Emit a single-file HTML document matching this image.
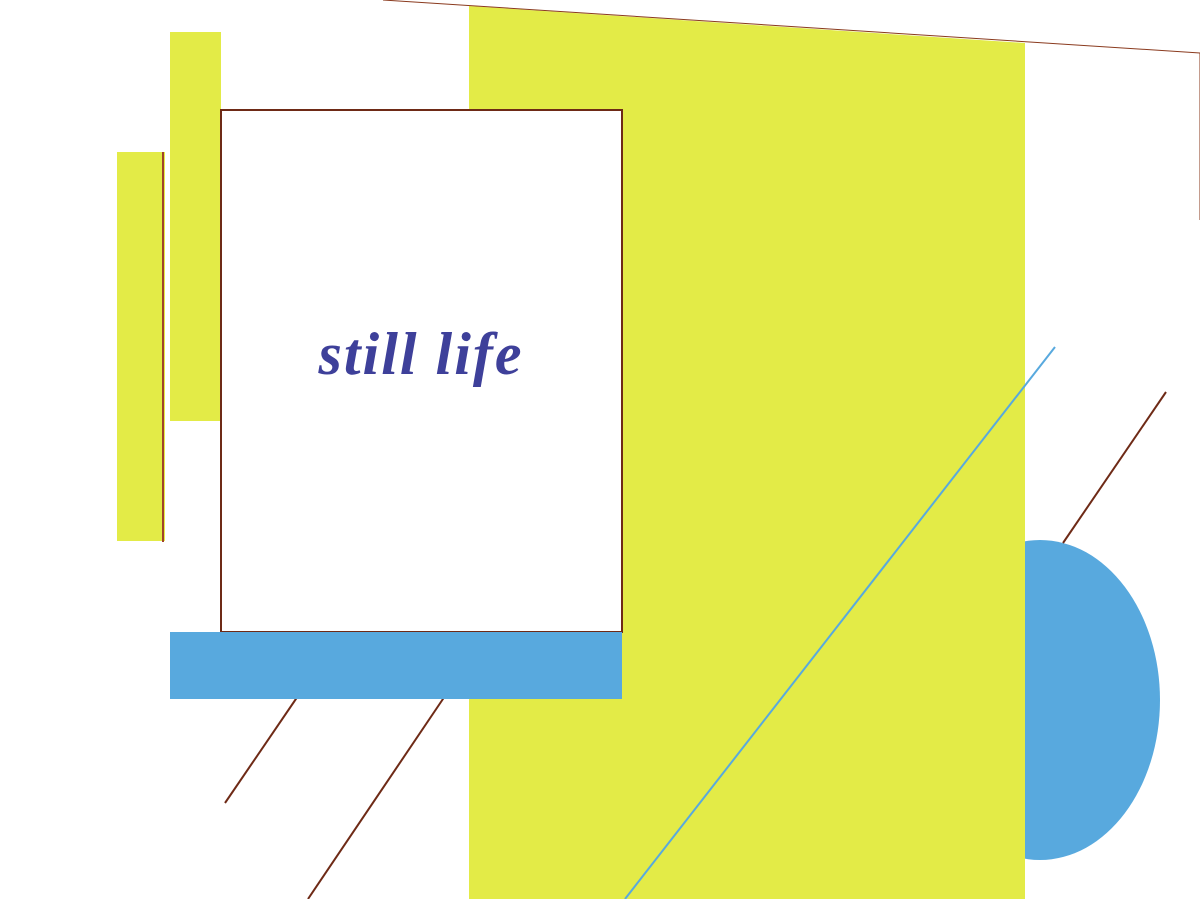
<!DOCTYPE html>
<html><head><meta charset="utf-8"><style>
html,body{margin:0;padding:0;background:#fff;width:1200px;height:899px;overflow:hidden}
</style></head><body>
<svg width="1200" height="899" viewBox="0 0 1200 899" xmlns="http://www.w3.org/2000/svg">
<rect width="1200" height="899" fill="#fff"/>
<ellipse cx="1040" cy="700" rx="120" ry="160" fill="#58a9de"/>
<polygon points="469,6 1025,43 1025,899 469,899" fill="#e3eb47"/>
<polyline points="383,0 1200,53 1200,220" fill="none" stroke="#8a3a1e" stroke-width="1"/>
<line x1="1063" y1="543" x2="1166" y2="392" stroke="#6e2a16" stroke-width="2"/>
<line x1="625" y1="899" x2="1055" y2="347" stroke="#58a9de" stroke-width="2"/>
<line x1="225" y1="803" x2="300" y2="693" stroke="#6e2a16" stroke-width="2"/>
<line x1="308" y1="899" x2="447" y2="693" stroke="#6e2a16" stroke-width="2"/>
<rect x="170" y="32" width="51" height="389" fill="#e3eb47"/>
<rect x="117" y="152" width="48" height="389" fill="#e3eb47"/>
<line x1="163" y1="152" x2="163" y2="542" stroke="#a0432a" stroke-width="2"/>
<rect x="221" y="110" width="401" height="522" fill="#fff" stroke="#6e2a16" stroke-width="2"/>
<rect x="170" y="632" width="452" height="67" fill="#58a9de"/>
<text x="421" y="374" text-anchor="middle" font-family="Liberation Serif, serif" font-style="italic" font-weight="bold" font-size="60" letter-spacing="2" fill="#3e409a">still life</text>
</svg>
</body></html>
